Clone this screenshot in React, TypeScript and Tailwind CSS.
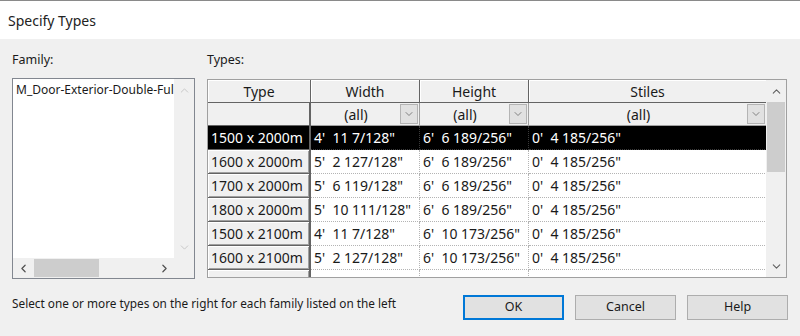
import { ChevronDown, ChevronLeft, ChevronRight, ChevronUp } from "lucide-react";

const rows = [
  { type: "1500 x 2000m", width: "4'  11 7/128\"", height: "6'  6 189/256\"", stiles: "0'  4 185/256\"" },
  { type: "1600 x 2000m", width: "5'  2 127/128\"", height: "6'  6 189/256\"", stiles: "0'  4 185/256\"" },
  { type: "1700 x 2000m", width: "5'  6 119/128\"", height: "6'  6 189/256\"", stiles: "0'  4 185/256\"" },
  { type: "1800 x 2000m", width: "5'  10 111/128\"", height: "6'  6 189/256\"", stiles: "0'  4 185/256\"" },
  { type: "1500 x 2100m", width: "4'  11 7/128\"", height: "6'  10 173/256\"", stiles: "0'  4 185/256\"" },
  { type: "1600 x 2100m", width: "5'  2 127/128\"", height: "6'  10 173/256\"", stiles: "0'  4 185/256\"" },
  { type: "1700 x 2100m", width: "5'  6 119/128\"", height: "6'  10 173/256\"", stiles: "0'  4 185/256\"" },
];

const cols = "grid grid-cols-[103px_109px_109px_238px]";

function FilterCell() {
  return (
    <div className="relative flex h-[23px] items-center justify-center border-b border-r border-[#a0a0a0] bg-[#f0f0f0]">
      <span className="pr-[18px]">(all)</span>
      <span className="absolute right-[1px] top-[1px] flex h-[20px] w-[18px] items-center justify-center border border-[#b4b4b4] bg-[#e1e1e1]">
        <ChevronDown className="h-[12px] w-[12px] text-[#606060]" strokeWidth={1.5} />
      </span>
    </div>
  );
}

function TypesGrid() {
  return (
    <div className="flex h-[199px] w-[580px] border border-[#a0a0a0] bg-[#f0f0f0] text-[14px]">
      <div className="h-full w-[559px] overflow-hidden">
        <div className={`${cols} h-[23px] bg-[#f0f0f0]`}>
          {["Type", "Width", "Height", "Stiles"].map((h) => (
            <div
              key={h}
              className="flex items-center justify-center border-b border-r border-[#646464] shadow-[inset_1px_1px_0_#ffffff]"
            >
              {h}
            </div>
          ))}
        </div>
        <div className={cols}>
          <div className="h-[23px] border-b border-r-2 border-[#646464] bg-[#f0f0f0]" />
          <FilterCell />
          <FilterCell />
          <FilterCell />
        </div>
        {rows.map((r, i) => {
          const sel = i === 0;
          const cell = sel
            ? "bg-black text-white border-[#3a3a3a]"
            : "bg-white text-[#1a1a1a] border-[#b4b4b4]";
          return (
            <div key={i} className={`${cols} h-[24px]`}>
              <div
                className={`flex items-center whitespace-pre border-b border-r-2 pl-[3px] ${
                  sel
                    ? "border-[#646464] bg-black text-white"
                    : "border-[#646464] bg-[#f0f0f0] text-[#1a1a1a] shadow-[inset_1px_1px_0_#ffffff,inset_-1px_-1px_0_#a0a0a0]"
                }`}
              >
                {r.type}
              </div>
              <div className={`flex items-center whitespace-pre border-b border-r border-dotted pl-[3px] ${cell}`}>{r.width}</div>
              <div className={`flex items-center whitespace-pre border-b border-r border-dotted pl-[3px] ${cell}`}>{r.height}</div>
              <div className={`flex items-center whitespace-pre border-b border-r border-dotted pl-[3px] ${cell}`}>{r.stiles}</div>
            </div>
          );
        })}
      </div>
      <div className="flex h-full w-[20px] flex-col bg-[#f0f0f0]">
        <div className="flex h-[22px] items-center justify-center">
          <ChevronUp className="h-[13px] w-[13px] text-[#606060]" strokeWidth={2} />
        </div>
        <div className="mx-[1px] h-[70px] bg-[#cdcdcd]" />
        <div className="flex-1" />
        <div className="flex h-[22px] items-center justify-center">
          <ChevronDown className="h-[13px] w-[13px] text-[#606060]" strokeWidth={2} />
        </div>
      </div>
    </div>
  );
}

function FamilyList() {
  return (
    <div className="flex h-[201px] w-[183px] flex-col border border-[#828790] bg-white">
      <div className="flex flex-1">
        <div className="flex-1 overflow-hidden whitespace-nowrap pl-[3px] pt-[1px] text-[12px] leading-[20px]">
          M_Door-Exterior-Double-Full
        </div>
        <div className="flex w-[20px] flex-col justify-between bg-[#f0f0f0]">
          <div className="flex h-[22px] items-center justify-center">
            <ChevronUp className="h-[13px] w-[13px] text-[#bfbfbf]" strokeWidth={1.5} />
          </div>
          <div className="flex h-[22px] items-center justify-center">
            <ChevronDown className="h-[13px] w-[13px] text-[#bfbfbf]" strokeWidth={1.5} />
          </div>
        </div>
      </div>
      <div className="flex h-[20px] bg-[#f0f0f0]">
        <div className="flex w-[20px] items-center justify-center">
          <ChevronLeft className="h-[13px] w-[13px] text-[#505050]" strokeWidth={2.25} />
        </div>
        <div className="flex-1 py-[1px]">
          <div className="ml-[1px] h-full w-[65px] bg-[#cdcdcd]" />
        </div>
        <div className="flex w-[20px] items-center justify-center">
          <ChevronRight className="h-[13px] w-[13px] text-[#505050]" strokeWidth={2.25} />
        </div>
        <div className="w-[20px]" />
      </div>
    </div>
  );
}

export default function App() {
  return (
    <div
      className="flex h-[336px] w-[800px] flex-col overflow-hidden bg-[#f0f0f0] text-[12.5px] text-[#1a1a1a]"
      style={{ fontFamily: '"Noto Sans", "Open Sans", sans-serif' }}
    >
      <div className="flex h-[39px] items-center border-t border-[#8a8a8a] bg-white pl-[8px] text-[14px] text-[#222]">
        Specify Types
      </div>
      <div className="flex gap-[12px] px-[12px] pt-[11px]">
        <div className="flex flex-col">
          <div className="h-[20px] leading-[20px]">Family:</div>
          <div className="mt-[8px]">
            <FamilyList />
          </div>
        </div>
        <div className="flex flex-col">
          <div className="h-[20px] leading-[20px]">Types:</div>
          <div className="mt-[9px]">
            <TypesGrid />
          </div>
        </div>
      </div>
      <div className="flex items-start px-[12px] pt-[16px]">
        <div className="flex-1 text-[11.8px] leading-[16px]">
          Select one or more types on the right for each family listed on the left
        </div>
        <div className="flex gap-[11px]">
          <button className="h-[25px] w-[101px] border-2 border-[#0078d7] bg-[#e1e1e1]">OK</button>
          <button className="h-[25px] w-[101px] border border-[#adadad] bg-[#e1e1e1]">Cancel</button>
          <button className="h-[25px] w-[101px] border border-[#adadad] bg-[#e1e1e1]">Help</button>
        </div>
      </div>
    </div>
  );
}
